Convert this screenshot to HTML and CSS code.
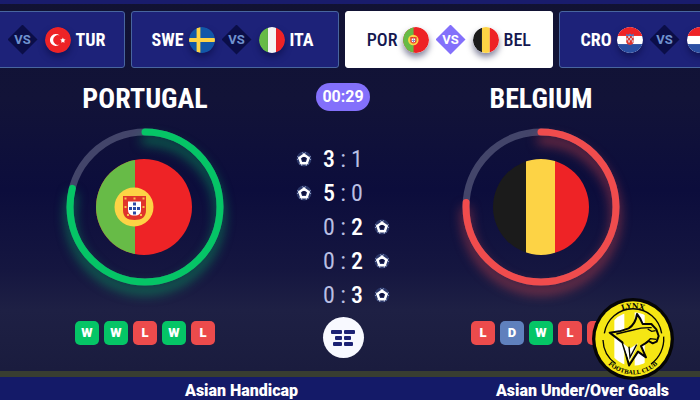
FILE: index.html
```html
<!DOCTYPE html>
<html lang="en">

<head>
    <meta charset="UTF-8">
    <meta name="viewport" content="width=device-width, initial-scale=1.0">
    <title>Portugal vs Belgium</title>
    <link rel="stylesheet" href="styles.css">
</head>

<body>

    <!-- shared flag drawings -->
    <svg class="defs" width="0" height="0" aria-hidden="true">
        <defs>
            <clipPath id="round"><circle cx="48" cy="48" r="48"/></clipPath>
            <symbol id="por" viewBox="0 0 96 96">
                <g clip-path="url(#round)">
                    <rect width="96" height="96" fill="#ee2326"/>
                    <rect width="39" height="96" fill="#67bb47"/>
                </g>
                <circle cx="38" cy="48" r="19.500" fill="#fdd345"/>
                <path d="M27 37h23v14c0 7-4 10-11.500 10S27 58 27 51z" fill="#e0342b"/>
                <path d="M32 42.500h13v8c0 4-2 6-6.500 6S32 54.500 32 50.500z" fill="#fff"/>
                <path d="M37 43.500h3v3h-3zM37 48h3v3h-3zM37 52.500h3v3h-3zM33 48h3v3h-3zM41 48h3v3h-3z" fill="#2b4aa5"/>
                <path d="M28.500 38.500h2v2h-2zM37.500 38.500h2v2h-2zM46.500 38.500h2v2h-2zM28.500 47h2v2h-2zM46.500 47h2v2h-2zM31 55h2v2h-2zM44 55h2v2h-2z" fill="#fbc04a"/>
            </symbol>
            <symbol id="bel" viewBox="0 0 96 96">
                <g clip-path="url(#round)">
                    <rect x="33" width="29" height="96" fill="#fdd345"/>
                    <rect width="33" height="96" fill="#1b1b1b"/>
                    <rect x="62" width="34" height="96" fill="#ee2326"/>
                </g>
            </symbol>
            <symbol id="tur" viewBox="0 0 96 96">
                <circle cx="48" cy="48" r="48" fill="#ee2326"/>
                <path d="M54 31a22 22 0 1 0 0 34a18 18 0 1 1 0-34z" fill="#fff"/>
                <path d="M66 39l3 6 7 1-5 5 1 7-6-3-6 3 1-7-5-5 7-1z" fill="#fff"/>
            </symbol>
            <symbol id="swe" viewBox="0 0 96 96">
                <g clip-path="url(#round)">
                    <rect width="96" height="96" fill="#1157a8"/>
                    <path d="M28 0h14v41h54v14H42v41H28V55H0V41h28z" fill="#fdd345"/>
                </g>
            </symbol>
            <symbol id="ita" viewBox="0 0 96 96">
                <g clip-path="url(#round)">
                    <rect x="33" width="30" height="96" fill="#f4f4f4"/>
                    <rect width="33" height="96" fill="#67bb47"/>
                    <rect x="63" width="33" height="96" fill="#ee2326"/>
                </g>
            </symbol>
            <symbol id="cro" viewBox="0 0 96 96">
                <g clip-path="url(#round)">
                    <rect width="96" height="96" fill="#fff"/>
                    <rect width="96" height="33" fill="#ee2326"/>
                    <rect y="63" width="96" height="33" fill="#2a4fa2"/>
                </g>
                <path d="M34 25l7 4 7-5 7 5 7-4v9H34z" fill="#4d78c0"/>
                <path d="M34 33h28v20q0 12-14 13q-14-1-14-13z" fill="#e0342b"/>
                <path d="M41 33h7v8h-7zM55 33h7v8h-7zM34 41h7v8h-7zM48 41h7v8h-7zM41 49h7v8h-7zM55 49h7v8h-7z" fill="#d9b8c4"/>
            </symbol>
            <symbol id="ned" viewBox="0 0 96 96">
                <g clip-path="url(#round)">
                    <rect width="96" height="96" fill="#fff"/>
                    <rect width="96" height="33" fill="#ee2326"/>
                    <rect y="63" width="96" height="33" fill="#2a4fa2"/>
                </g>
            </symbol>
            <symbol id="ball" viewBox="0 0 16 16">
                <circle cx="8" cy="8" r="7.500" fill="#2b3769"/>
                <path d="M8 3l2-1.500M8 3L6 1.500M3 7L1.500 5M3 7L1 9M13 7l1.500-2M13 7l2 2M5 12.500L3 13M5 12.500L6 15M11 12.500l2 .5M11 12.500L10 15" stroke="#8e9bc4" stroke-width="1"/>
                <path d="M8 3.600L12.600 7 10.800 12.200H5.200L3.400 7z" fill="#2b3769" stroke="#fff" stroke-width="2.400" stroke-linejoin="round"/>
                <path d="M8 5.800L10.200 7.400 9.400 10H6.600L5.800 7.400z" fill="#10123e"/>
            </symbol>
        </defs>
    </svg>

    <nav class="matches">
        <a href="#" class="match">
            <span class="side home"></span>
            <span class="vs">VS</span>
            <span class="side"><svg class="flag"><use href="#tur"/></svg> TUR</span>
        </a>
        <a href="#" class="match">
            <span class="side home">SWE <svg class="flag"><use href="#swe"/></svg></span>
            <span class="vs">VS</span>
            <span class="side"><svg class="flag"><use href="#ita"/></svg> ITA</span>
        </a>
        <a href="#" class="match active">
            <span class="side home">POR <svg class="flag"><use href="#por"/></svg></span>
            <span class="vs">VS</span>
            <span class="side"><svg class="flag"><use href="#bel"/></svg> BEL</span>
        </a>
        <a href="#" class="match">
            <span class="side home">CRO <svg class="flag"><use href="#cro"/></svg></span>
            <span class="vs">VS</span>
            <span class="side"><svg class="flag"><use href="#ned"/></svg></span>
        </a>
    </nav>

    <main class="board">
        <section class="team">
            <h2>PORTUGAL</h2>
            <svg class="ring green" viewBox="0 0 158 158">
                <circle class="track" cx="79" cy="79" r="75"/>
                <g class="glow">
                    <circle class="value" cx="79" cy="79" r="75" pathLength="100" stroke-dasharray="79 100" transform="rotate(-90 79 79)"/>
                </g>
                <use href="#por" x="30" y="31" width="96" height="96"/>
            </svg>
            <ul class="form">
                <li class="win">W</li>
                <li class="win">W</li>
                <li class="loss">L</li>
                <li class="win">W</li>
                <li class="loss">L</li>
            </ul>
        </section>

        <section class="middle">
            <time class="timer">00:29</time>
            <ul class="scores">
                <li><svg class="ball"><use href="#ball"/></svg><b>3</b><i>:</i><span>1</span></li>
                <li><svg class="ball"><use href="#ball"/></svg><b>5</b><i>:</i><span>0</span></li>
                <li class="away"><span>0</span><i>:</i><b>2</b><svg class="ball"><use href="#ball"/></svg></li>
                <li class="away"><span>0</span><i>:</i><b>2</b><svg class="ball"><use href="#ball"/></svg></li>
                <li class="away"><span>0</span><i>:</i><b>3</b><svg class="ball"><use href="#ball"/></svg></li>
            </ul>
            <button class="stats" aria-label="Statistics">
                <svg width="24" height="18" viewBox="0 0 24 18" fill="#1c2274">
                    <rect x="0" y="1" width="11" height="4" rx="1"/>
                    <rect x="13" y="1" width="11" height="4" rx="1"/>
                    <rect x="4" y="7" width="7" height="4" rx="1"/>
                    <rect x="13" y="7" width="7" height="4" rx="1"/>
                    <rect x="2" y="13" width="9" height="4" rx="1"/>
                    <rect x="13" y="13" width="9" height="4" rx="1"/>
                </svg>
            </button>
        </section>

        <section class="team">
            <h2>BELGIUM</h2>
            <svg class="ring red" viewBox="0 0 158 158">
                <circle class="track" cx="79" cy="79" r="75"/>
                <g class="glow">
                    <circle class="value" cx="79" cy="79" r="75" pathLength="100" stroke-dasharray="76 100" transform="rotate(-90 79 79)"/>
                </g>
                <use href="#bel" x="31" y="31" width="96" height="96"/>
            </svg>
            <ul class="form">
                <li class="loss">L</li>
                <li class="draw">D</li>
                <li class="win">W</li>
                <li class="loss">L</li>
                <li class="loss">L</li>
            </ul>
        </section>

        <svg class="club" viewBox="45 24 246 246">
            <defs>
                <clipPath id="inner"><circle cx="168" cy="147" r="80"/></clipPath>
                <path id="arcTop" d="M76 147a92 92 0 0 1 184 0"/>
                <path id="arcBottom" d="M62 147a106 106 0 0 0 212 0"/>
            </defs>
            <circle cx="168" cy="147" r="123" fill="#050505"/>
            <circle cx="168" cy="147" r="113" fill="#f5e614"/>
            <g clip-path="url(#inner)">
                <rect x="112" y="60" width="30" height="175" fill="#fff"/>
                <rect x="173" y="60" width="30" height="175" fill="#fff"/>
            </g>
            <!-- inner ring, broken beside the ears and the throat -->
            <path d="M82 130A87 87 0 0 1 254 130M78 150A90 90 0 0 0 116 221M260 140A93 93 0 0 1 222 222" fill="none" stroke="#050505" stroke-width="4"/>
            <path d="M98 128L127 124 155 115Q176 102 180 72Q190 84 197 102L223 102 238 118 245 138 239 155 227 160 215 153 205 160 192 168 207 202 183 185 156 226 146 190 136 157z" fill="#f5e614" stroke="#050505" stroke-width="6" stroke-linejoin="round"/>
            <path d="M138 160L158 176 182 160 174 182 157 215z" fill="#fff"/>
            <path d="M118 132L168 120Q194 112 224 113M212 117l12 7 12-2M156 170l3 32 20-38M208 158l12-12 18 2" fill="none" stroke="#050505" stroke-width="4"/>
            <text class="club-name" text-anchor="middle"><textPath href="#arcTop" startOffset="50%">LYNX</textPath></text>
            <text class="club-sub" text-anchor="middle"><textPath href="#arcBottom" startOffset="50%">FOOTBALL CLUB</textPath></text>
        </svg>
    </main>

    <footer class="markets">
        <span>Asian Handicap</span>
        <span>Asian Under/Over Goals</span>
    </footer>

</body>

</html>
```
FILE: styles.css
```css
* {
    box-sizing: border-box;
}

body {
    margin: 0;
    min-height: 100vh;
    overflow: hidden;
    background: linear-gradient(#111233 0, #121338 100px, #0c0d3c 190px, #151640 270px, #1e2044 310px, #1a1c3e 370px);
    border-top: 4px solid #191c6c;
    color: #fff;
    font-family: "Roboto", sans-serif;
}

ul {
    list-style: none;
    margin: 0;
    padding: 0;
}

.defs {
    position: absolute;
}

/* match strip */
.matches {
    display: flex;
    justify-content: center;
    gap: 6px;
    padding: 7px 16px 0 0;
    overflow: hidden;
}

.match {
    flex: 0 0 208px;
    display: grid;
    grid-template-columns: 1fr auto 1fr;
    align-items: center;
    gap: 7px;
    height: 57px;
    padding-left: 3px;
    background-color: #1d2279;
    border: 1px solid #48659f;
    border-radius: 3px;
    color: #fff;
    font-family: "Roboto Condensed", "Roboto", sans-serif;
    font-size: 18px;
    font-weight: bold;
    text-decoration: none;
}

.match.active {
    background-color: #fff;
    border-color: #fff;
    color: #14174f;
    font-weight: 500;
}

.side {
    display: flex;
    align-items: center;
    gap: 5px;
}

.home {
    justify-content: flex-end;
}

.flag {
    width: 26px;
    height: 26px;
    border-radius: 50%;
    box-shadow: 0 4px 6px rgba(8, 10, 60, 0.5);
}

.vs {
    width: 30px;
    height: 30px;
    background-color: #0b0e48;
    clip-path: polygon(50% 0, 100% 50%, 50% 100%, 0 50%);
    color: #6f92cf;
    font-family: "Roboto", sans-serif;
    font-size: 13px;
    font-weight: bold;
    line-height: 30px;
    text-align: center;
}

.active .vs {
    background-color: #8370fb;
    color: #fff;
}

/* teams and scores */
.board {
    position: relative;
    display: grid;
    grid-template-columns: 1fr 1fr 1fr;
    height: 303px;
    padding: 15px 60px 0 46px;
}

.team,
.middle {
    display: flex;
    flex-direction: column;
    align-items: center;
}

h2 {
    margin: 0;
    font-family: "Roboto Condensed", "Roboto", sans-serif;
    font-size: 28px;
    line-height: 32px;
}

.ring {
    width: 158px;
    height: 158px;
    margin-top: 13px;
    overflow: visible;
}

.track,
.value {
    fill: none;
    stroke-width: 7px;
}

.track {
    stroke: #43456a;
}

.value {
    stroke-linecap: round;
}

.green .value {
    stroke: #05c566;
}

.green .glow {
    filter: drop-shadow(0 8px 6px rgba(5, 197, 102, 0.6));
}

.red .value {
    stroke: #f04c4d;
}

.red .glow {
    filter: drop-shadow(0 8px 6px rgba(240, 76, 77, 0.6));
}

.form {
    display: flex;
    gap: 5px;
    margin-top: 35px;
}

.form li {
    width: 24px;
    height: 24px;
    border-radius: 5px;
    font-size: 13px;
    font-weight: 900;
    line-height: 24px;
    text-align: center;
}

.win {
    background-color: #05c566;
}

.loss {
    background-color: #ec4b4c;
}

.draw {
    background-color: #5f80bd;
}

.timer {
    padding: 0 6px;
    border-radius: 14px;
    background-color: #8370fb;
    font-size: 16px;
    font-weight: bold;
    line-height: 28px;
}

.scores {
    margin-top: 31px;
}

.scores li {
    display: grid;
    grid-template-columns: 36px 14px 14px 14px 36px;
    height: 34px;
    align-items: center;
    justify-items: center;
    font-family: "Roboto Condensed", "Roboto", sans-serif;
    font-size: 24px;
    line-height: 34px;
}

.scores .away span {
    grid-column: 2;
}

.scores b {
    font-weight: 500;
}

.scores span,
.scores i {
    color: #b9bfe2;
    font-style: normal;
}

.ball {
    width: 16px;
    height: 16px;
}

.stats {
    display: grid;
    place-items: center;
    width: 41px;
    height: 41px;
    margin-top: 5px;
    padding: 0;
    border: none;
    border-radius: 50%;
    background-color: #f8f9ff;
    cursor: pointer;
}

/* club badge over the board */
.club {
    position: absolute;
    right: 26px;
    bottom: -9px;
    width: 82px;
    height: 82px;
}

.club-name,
.club-sub {
    fill: #050505;
    font-family: "DejaVu Serif", serif;
    font-weight: bold;
}

.club-name {
    font-size: 22px;
}

.club-sub {
    font-size: 17px;
}

.markets {
    display: flex;
    justify-content: space-between;
    height: 29px;
    padding: 0 31px 0 185px;
    background-color: #141a68;
    border-top: 6px solid #383d31;
    font-size: 16px;
    font-weight: 900;
    line-height: 28px;
}
```
